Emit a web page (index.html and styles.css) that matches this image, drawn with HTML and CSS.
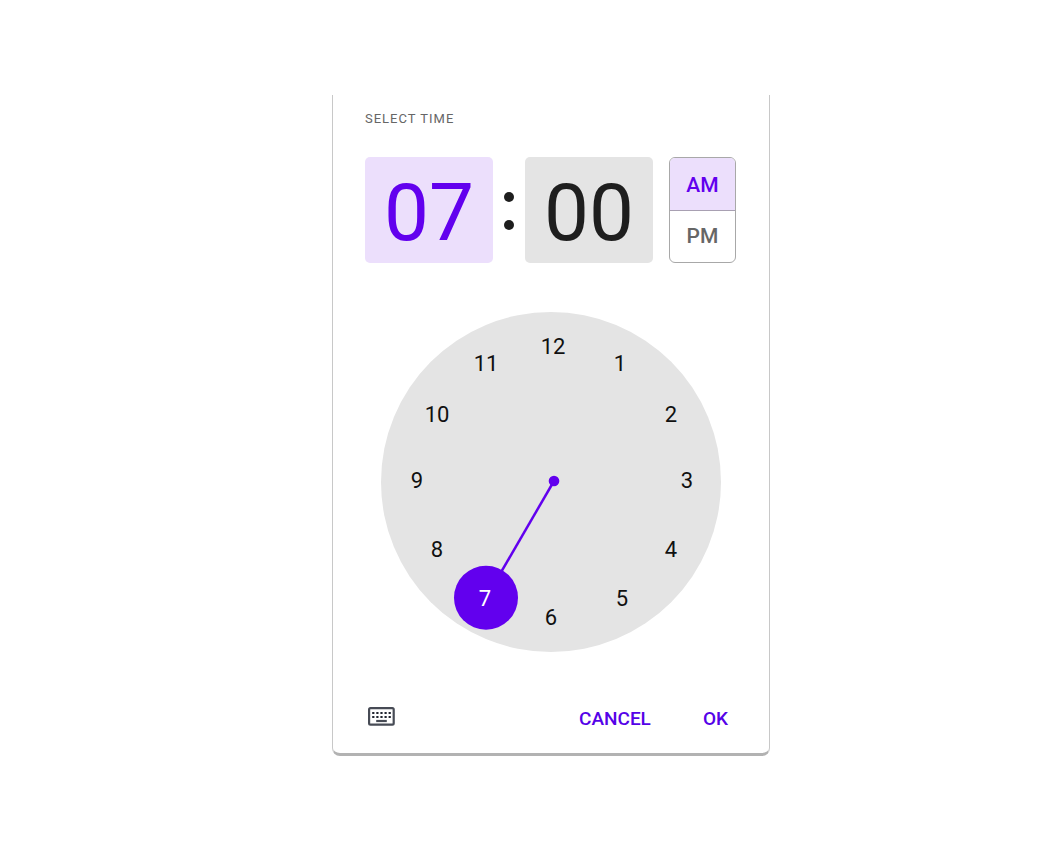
FILE: index.html
```html
<!DOCTYPE html>
<html lang="en">
<head>
<meta charset="utf-8">
<meta name="viewport" content="width=device-width, initial-scale=1">
<title>Select time</title>
<link rel="stylesheet" href="styles.css">
</head>
<body>
<main class="page">
  <section class="picker" role="dialog" aria-labelledby="picker-title">
    <h1 class="title" id="picker-title">SELECT TIME</h1>
    <div class="time">
      <button class="field field-active" type="button" aria-label="Hour 07">07</button>
      <div class="colon" aria-hidden="true"><span class="dot"></span><span class="dot"></span></div>
      <button class="field" type="button" aria-label="Minute 00">00</button>
      <div class="period" role="group" aria-label="Period">
        <button class="half half-active" type="button" aria-pressed="true">AM</button>
        <button class="half" type="button" aria-pressed="false">PM</button>
      </div>
    </div>
    <div class="dial" role="group" aria-label="Hour">
      <svg class="hand" viewBox="0 0 340 340" aria-hidden="true">
        <line x1="173" y1="169" x2="105" y2="286" stroke="#6200ee" stroke-width="2.5"/>
        <circle cx="173" cy="169" r="5.3" fill="#6200ee"/>
        <circle cx="105" cy="285.7" r="32" fill="#6200ee"/>
      </svg>
      <button class="hour h12" type="button">12</button>
      <button class="hour h1" type="button">1</button>
      <button class="hour h2" type="button">2</button>
      <button class="hour h3" type="button">3</button>
      <button class="hour h4" type="button">4</button>
      <button class="hour h5" type="button">5</button>
      <button class="hour h6" type="button">6</button>
      <button class="hour h7" type="button" aria-pressed="true">7</button>
      <button class="hour h8" type="button">8</button>
      <button class="hour h9" type="button">9</button>
      <button class="hour h10" type="button">10</button>
      <button class="hour h11" type="button">11</button>
    </div>
    <div class="actions">
      <button class="keyboard" type="button" aria-label="Enter time with keyboard">
        <svg class="keyboard-icon" viewBox="0 0 27 19" aria-hidden="true">
          <rect x="1.1" y="1.1" width="24.6" height="16.6" rx="1.4" fill="none" stroke="#474b55" stroke-width="2.2"/>
          <path d="M4.2 6h19M4.2 10h19" fill="none" stroke="#20242f" stroke-width="2.2" stroke-dasharray="2.2 1.9"/>
          <path d="M8.2 14h10.6" fill="none" stroke="#474b55" stroke-width="2.2"/>
        </svg>
      </button>
      <button class="action" type="button">CANCEL</button>
      <button class="action" type="button">OK</button>
    </div>
  </section>
</main>
</body>
</html>
```
FILE: styles.css
```css
* { box-sizing: border-box; }
body {
  margin: 0;
  background: #fff;
  font-family: Roboto, "Liberation Sans", sans-serif;
}
button {
  margin: 0;
  padding: 0;
  border: 0;
  background: none;
  font-family: inherit;
  cursor: pointer;
}
.page {
  display: flex;
  justify-content: center;
  padding: 95px 0 48px 38px;
}
.picker {
  width: 100%;
  max-width: 438px;
  padding: 14px 33px 18px 32px;
  border: 1px solid #c8c8c8;
  border-top: 0;
  border-bottom: 3px solid #b2b2b2;
  border-radius: 0 0 8px 8px;
}
.title {
  margin: 0;
  font-size: 13px;
  line-height: 20px;
  font-weight: 400;
  letter-spacing: 1px;
  color: #666;
}
.time {
  display: flex;
  margin-top: 28px;
}
.field {
  width: 128px;
  height: 106px;
  padding-top: 6px;
  border-radius: 5px;
  background: #e4e4e4;
  font-size: 80px;
  line-height: 100px;
  color: #1e1e1e;
}
.field-active {
  background: #ecdffc;
  color: #6200ee;
}
.colon {
  display: flex;
  flex-direction: column;
  align-items: center;
  justify-content: center;
  gap: 18px;
  width: 32px;
  padding-top: 2px;
}
.dot {
  width: 10px;
  height: 10px;
  border-radius: 50%;
  background: #1e1e1e;
}
.period {
  display: grid;
  grid-template-rows: 53px 1fr;
  width: 67px;
  height: 106px;
  margin-left: auto;
  overflow: hidden;
  border: 1px solid #a8a8a8;
  border-radius: 6px;
}
.half {
  padding-bottom: 2px;
  font-size: 21px;
  line-height: 48px;
  font-weight: 500;
  color: #666;
}
.half-active {
  padding: 2px 0 0;
  border-bottom: 1px solid #a8a0b2;
  background: #ecdffc;
  color: #6200ee;
}
.dial {
  position: relative;
  width: 340px;
  height: 340px;
  margin: 49px 0 0 16px;
  border-radius: 50%;
  background: #e4e4e4;
}
.hand {
  display: block;
  width: 100%;
}
.hour {
  position: absolute;
  width: 40px;
  height: 34px;
  margin: -16px 0 0 -20px;
  font-size: 22px;
  line-height: 34px;
  color: #101010;
}
.h12 { left: 172px; top: 34px; }
.h1 { left: 239px; top: 51px; }
.h2 { left: 290px; top: 102px; }
.h3 { left: 306px; top: 168px; }
.h4 { left: 290px; top: 237px; }
.h5 { left: 241px; top: 286px; }
.h6 { left: 170px; top: 305px; }
.h7 { left: 104px; top: 286px; color: #fff; }
.h8 { left: 56px; top: 237px; }
.h9 { left: 36px; top: 168px; }
.h10 { left: 56px; top: 102px; }
.h11 { left: 105px; top: 51px; }
.actions {
  display: flex;
  align-items: center;
  gap: 52px;
  margin-top: 51px;
  padding: 0 8px 0 3px;
}
.keyboard {
  margin-right: auto;
  padding-bottom: 6px;
}
.keyboard-icon {
  display: block;
  width: 27px;
  height: 19px;
}
.action {
  font-size: 19px;
  line-height: 32px;
  font-weight: 500;
  color: #5502e8;
}
```
